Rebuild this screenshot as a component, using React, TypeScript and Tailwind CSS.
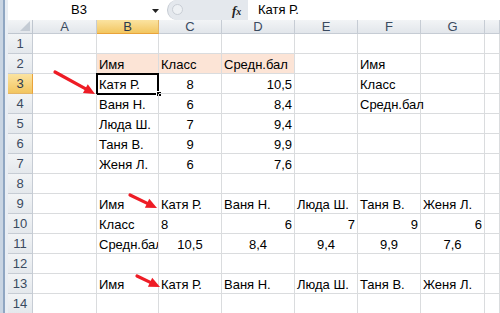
import React from "react";

type Cell = { t?: string; a?: "l" | "c" | "r"; bg?: boolean; clip?: boolean; sel?: boolean };

const W = ["w-[64px]", "w-[62px]", "w-[63px]", "w-[73px]", "w-[63px]", "w-[63px]", "w-[64px]", "w-[15px]"];
const LETTERS = ["A", "B", "C", "D", "E", "F", "G", ""];

const names = ["Катя Р.", "Ваня Н.", "Люда Ш.", "Таня В.", "Женя Л."];

function row(cells: Record<number, Cell>): Cell[] {
  const r: Cell[] = [];
  for (let i = 0; i < 8; i++) r.push(cells[i] || {});
  return r;
}

const DATA: Cell[][] = [
  row({}),
  row({ 1: { t: "Имя", bg: true }, 2: { t: "Класс", bg: true }, 3: { t: "Средн.бал", bg: true }, 5: { t: "Имя" } }),
  row({ 1: { t: "Катя Р.", sel: true }, 2: { t: "8", a: "c" }, 3: { t: "10,5", a: "r" }, 5: { t: "Класс" } }),
  row({ 1: { t: "Ваня Н." }, 2: { t: "6", a: "c" }, 3: { t: "8,4", a: "r" }, 5: { t: "Средн.бал" } }),
  row({ 1: { t: "Люда Ш." }, 2: { t: "7", a: "c" }, 3: { t: "9,4", a: "r" } }),
  row({ 1: { t: "Таня В." }, 2: { t: "9", a: "c" }, 3: { t: "9,9", a: "r" } }),
  row({ 1: { t: "Женя Л." }, 2: { t: "6", a: "c" }, 3: { t: "7,6", a: "r" } }),
  row({}),
  row({ 1: { t: "Имя" }, 2: { t: names[0] }, 3: { t: names[1] }, 4: { t: names[2] }, 5: { t: names[3] }, 6: { t: names[4] } }),
  row({ 1: { t: "Класс" }, 2: { t: "8" }, 3: { t: "6", a: "r" }, 4: { t: "7", a: "r" }, 5: { t: "9", a: "r" }, 6: { t: "6", a: "r" } }),
  row({ 1: { t: "Средн.бал", clip: true }, 2: { t: "10,5", a: "c" }, 3: { t: "8,4", a: "c" }, 4: { t: "9,4", a: "c" }, 5: { t: "9,9", a: "c" }, 6: { t: "7,6", a: "c" } }),
  row({}),
  row({ 1: { t: "Имя" }, 2: { t: names[0] }, 3: { t: names[1] }, 4: { t: names[2] }, 5: { t: names[3] }, 6: { t: names[4] } }),
  row({}),
];

function Arrow({ x1, y1, x2, y2 }: { x1: number; y1: number; x2: number; y2: number }) {
  const dx = x2 - x1;
  const dy = y2 - y1;
  const len = Math.hypot(dx, dy);
  const ux = dx / len;
  const uy = dy / len;
  const hl = 11;
  const hw = 5;
  const bx = x2 - ux * hl;
  const by = y2 - uy * hl;
  const p1 = `${bx - uy * hw},${by + ux * hw}`;
  const p2 = `${bx + uy * hw},${by - ux * hw}`;
  return (
    <g>
      <line x1={x1} y1={y1} x2={bx + ux * 2} y2={by + uy * 2} stroke="#ee1c25" strokeWidth={3.2} strokeLinecap="round" />
      <polygon points={`${x2},${y2} ${p1} ${p2}`} fill="#ee1c25" />
    </g>
  );
}

export default function App() {
  return (
    <div className="relative w-[500px] h-[313px] overflow-hidden bg-white flex text-[13px] text-black" style={{ fontFamily: '"Liberation Sans", Arial, sans-serif' }}>
      {/* left window edge */}
      <div className="w-[8px] h-full flex bg-[#dde5ee]">
        <div className="w-[3px] bg-[#c9d5e3]" />
        <div className="w-[2px] bg-[#8fa6c2]" />
        <div className="w-[3px] bg-[#e9eef4]" />
      </div>
      <div className="flex-1 flex flex-col">
        {/* formula bar */}
        <div className="h-[20px] flex items-stretch bg-white">
          <div className="w-[159px] flex items-center relative">
            <div className="w-[142px] text-center leading-[20px]">B3</div>
            <svg className="absolute left-[144px] top-[9px]" width="7" height="4" viewBox="0 0 7 4">
              <polygon points="0,0 7,0 3.5,4" fill="#222" />
            </svg>
          </div>
          <div className="w-[81px] relative bg-[#e4e8ed] rounded-l-[10px] border-l border-[#c4cad2] flex items-center">
            <div className="absolute left-[4px] top-[4px] w-[11px] h-[11px] rounded-full bg-[#eef1f4] border border-[#c9ced5]" />
            <span className="absolute left-[64px] top-[1px] italic font-bold text-[13px] text-[#222]" style={{ fontFamily: '"Liberation Serif", serif' }}>
              f<span className="text-[10px]">x</span>
            </span>
          </div>
          <div className="flex-1 flex items-center pl-[10px] leading-[20px]">Катя Р.</div>
        </div>
        <div className="h-[1px] bg-[#b9c0ca]" />
        <div className="h-[2px] bg-[#eceff3]" />
        <div className="h-[1px] bg-[#b9c0ca]" />
        <div className="h-[3px] bg-white" />
        {/* column headers */}
        <div className="flex h-[17px]">
          <div className="w-[25px] h-full relative bg-gradient-to-b from-[#f2f4f6] to-[#e2e6eb] border-r border-b border-[#bfc6cf]">
            <svg className="absolute right-[2px] bottom-[2px]" width="10" height="10" viewBox="0 0 10 10">
              <polygon points="10,0 10,10 0,10" fill="#c4cbd4" />
            </svg>
          </div>
          {LETTERS.map((l, i) => (
            <div
              key={i}
              className={
                `${W[i]} h-full flex items-center justify-center border-r border-b text-[13px] leading-none ` +
                (i === 1
                  ? "bg-gradient-to-b from-[#fbe3a0] to-[#f2c65f] border-b-[#e9a33b] border-r-[#e3b567] text-[#2b3a4e]"
                  : "bg-gradient-to-b from-[#f2f4f6] to-[#e2e6eb] border-[#c6ccd4] text-[#3a4a60]")
              }
            >
              {l}
            </div>
          ))}
        </div>
        {/* rows */}
        {DATA.map((r, ri) => (
          <div key={ri} className="flex h-[20px] shrink-0">
            <div
              className={
                "w-[25px] h-full flex items-center justify-center border-r border-b text-[13px] " +
                (ri === 2
                  ? "bg-gradient-to-b from-[#fbe3a0] to-[#f2c65f] border-r-[#e9a33b] border-b-[#e3b567] text-[#2b3a4e]"
                  : "bg-gradient-to-b from-[#f2f4f6] to-[#e4e8ec] border-[#c6ccd4] text-[#3a4a60]")
              }
            >
              {ri + 1}
            </div>
            {r.map((c, ci) => (
              <div
                key={ci}
                className={
                  `${W[ci]} h-full relative flex items-end pb-[1px] px-[2px] border-r border-b border-[#dadcde] leading-[15px] whitespace-nowrap ` +
                  (c.bg ? "bg-[#fce4d6] " : "") +
                  (c.clip ? "overflow-hidden " : "") +
                  (c.a === "c" ? "justify-center" : c.a === "r" ? "justify-end" : "justify-start")
                }
              >
                {c.t && <span>{c.t}</span>}
                {c.sel && (
                  <>
                    <div className="absolute left-[-1px] top-[-1px] w-[63px] h-[22px] border-2 border-black" />
                    <div className="absolute left-[59px] top-[17px] w-[6px] h-[6px] bg-black border border-white" />
                  </>
                )}
              </div>
            ))}
          </div>
        ))}
      </div>
      <svg className="absolute left-0 top-0 pointer-events-none" width="500" height="313" viewBox="0 0 500 313">
        <Arrow x1={55} y1={72} x2={95} y2={94} />
        <Arrow x1={130} y1={195} x2={157} y2={208} />
        <Arrow x1={137} y1={276} x2={160} y2={287} />
      </svg>
    </div>
  );
}
